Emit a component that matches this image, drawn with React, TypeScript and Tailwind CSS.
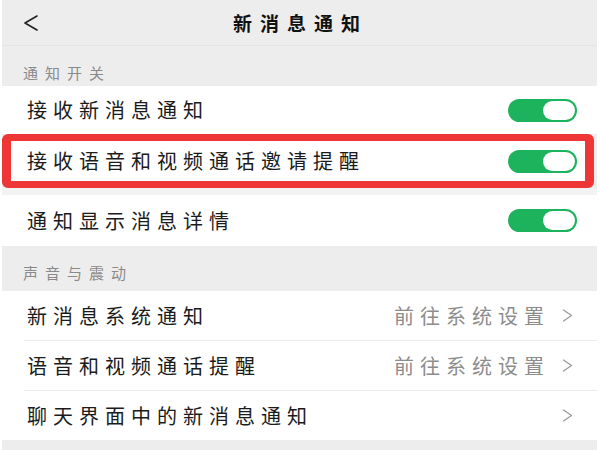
import type { ReactNode } from 'react';

const font = { fontFamily: '"Noto Sans CJK SC", "Noto Sans", sans-serif' };

function Toggle() {
  return (
    <div className="flex h-[23px] w-[69px] items-center justify-end rounded-full bg-[#1db25c] pr-[2px]">
      <div className="h-[19px] w-[32px] rounded-full bg-white" />
    </div>
  );
}

function Chevron() {
  return (
    <svg width="11" height="13" viewBox="0 0 11 13" fill="none">
      <path d="M1.5 1 L9.5 6.5 L1.5 12" stroke="#9a9a9a" strokeWidth="1.3" strokeLinecap="round" strokeLinejoin="round" />
    </svg>
  );
}

function SectionLabel({ children, h }: { children: ReactNode; h: string }) {
  return (
    <div className={`${h} pl-[21px] pt-[17px] text-[15px] leading-[20px] tracking-[7px] text-[#8a8a8a]`}>{children}</div>
  );
}

function Row({ label, right, className = '' }: { label: string; right: ReactNode; className?: string }) {
  return (
    <div className={`flex items-center justify-between bg-white pl-[25px] ${className}`}>
      <span className="text-[20px] leading-[26px] tracking-[6px] text-[#1b1b1b]">{label}</span>
      {right}
    </div>
  );
}

function LinkRight({ text }: { text?: string }) {
  return (
    <div className="flex items-center gap-[12px] pr-[24px]">
      {text && <span className="text-[20px] leading-[26px] tracking-[6px] text-[#8c8c8c]">{text}</span>}
      <Chevron />
    </div>
  );
}

export default function App() {
  return (
    <div className="h-[450px] w-[600px] overflow-hidden bg-white" style={font}>
      <div className="ml-[2px] h-[450px] w-[595px] bg-[#ededed]">
        {/* header */}
        <div className="flex h-[46px] items-center border-b border-[#e4e4e4]">
          <div className="w-[80px] pl-[21px]">
            <svg width="16" height="16" viewBox="0 0 16 16" fill="none">
              <path d="M14 1 L2 8 L14 15" stroke="#222" strokeWidth="1.6" strokeLinecap="round" strokeLinejoin="round" />
            </svg>
          </div>
          <div className="flex-1 pl-[2px] text-center text-[19px] font-bold leading-[26px] tracking-[8px] text-[#111]">新消息通知</div>
          <div className="w-[80px]" />
        </div>

        <SectionLabel h="h-[40px]">通知开关</SectionLabel>

        <Row label="接收新消息通知" right={<div className="pr-[20px]"><Toggle /></div>} className="h-[48px]" />

        <div className="mr-[3px] flex h-[54px] items-center justify-between rounded-[6px] border-x-[9px] border-y-[7px] border-[#ee3636] bg-white pl-[16px] pr-[8px]">
          <span className="text-[20px] leading-[26px] tracking-[6px] text-[#1b1b1b]">接收语音和视频通话邀请提醒</span>
          <Toggle />
        </div>

        <div className="h-[7px] bg-[#f3f3f3]" />

        <Row label="通知显示消息详情" right={<div className="pr-[20px]"><Toggle /></div>} className="h-[51px]" />

        <SectionLabel h="h-[45px]">声音与震动</SectionLabel>

        <Row label="新消息系统通知" right={<LinkRight text="前往系统设置" />} className="h-[49px]" />
        <div className="bg-white pl-[22px]">
          <div className="h-px bg-[#ececec]" />
        </div>
        <Row label="语音和视频通话提醒" right={<LinkRight text="前往系统设置" />} className="h-[49px]" />
        <div className="bg-white pl-[22px]">
          <div className="h-px bg-[#ececec]" />
        </div>
        <Row label="聊天界面中的新消息通知" right={<LinkRight />} className="h-[49px]" />
      </div>
    </div>
  );
}
